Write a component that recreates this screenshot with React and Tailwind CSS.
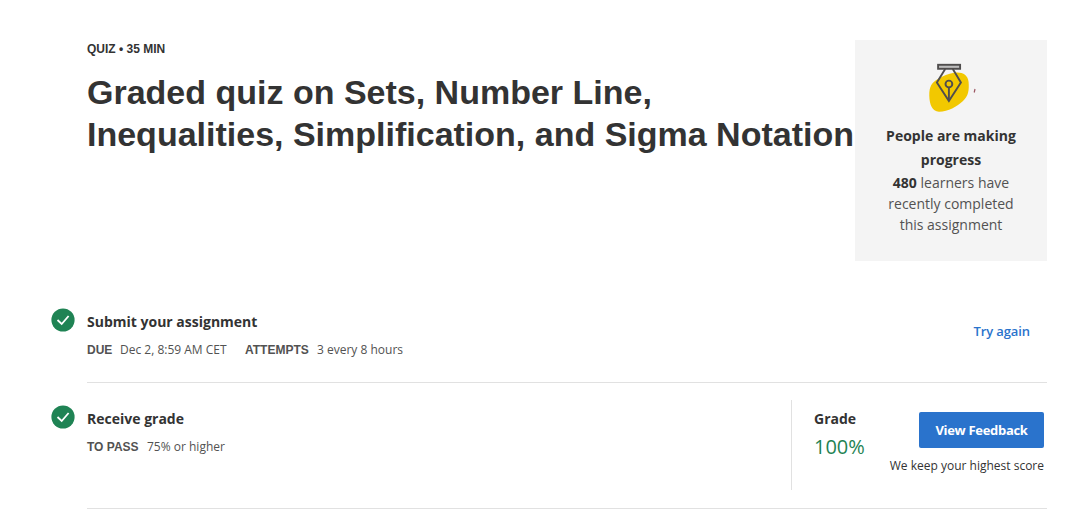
function DoneIcon() {
  return (
    <svg className="block h-6 w-6 shrink-0" viewBox="0 0 24 24" aria-hidden="true">
      <circle cx="12" cy="12" r="11.6" fill="#1f8354" />
      <path d="M6.500 12 L10.700 16 L17.600 8" fill="none" stroke="#fff" strokeWidth="1.800" />
    </svg>
  );
}

function PenIcon() {
  return (
    <svg className="block h-[50px] w-[50px]" viewBox="0 0 50 50" aria-hidden="true">
      <path
        d="M29 10.800 C36.500 9.500 43 12.500 43.600 20 C44.200 28 43.500 34 38 39 C32 44.500 23 49.800 14 49.700 C7 49.500 4.500 42 4.300 34 C4.100 24 7 20.500 13 17 C18.500 13.800 23 11.700 29 10.800 Z"
        fill="#f2c800"
      />
      <g fill="none" stroke="#4f4d4d" strokeWidth="1.900">
        <rect x="13.100" y="2.800" width="22" height="4" fill="#bdbdbd" />
        <path d="M20.200 7 L11.900 20.500 L23.900 39 L35.900 20.500 L27.800 7" />
        <circle cx="23.900" cy="22" r="3.400" />
        <path d="M23.900 25.500 V39" />
      </g>
    </svg>
  );
}

function Detail({ label, labelClass, children, valueClass }) {
  return (
    <div className="flex">
      <span className={`font-['Liberation_Sans'] text-[12px] font-bold text-[#525252] ${labelClass}`}>{label}</span>
      <span className={`text-[12px] text-[#525252] ${valueClass}`}>{children}</span>
    </div>
  );
}

export default function App() {
  return (
    <main className="h-[510px] w-[1077px] overflow-hidden bg-white pt-10 pr-[30px] pl-[51px] font-['Open_Sans',sans-serif] whitespace-nowrap text-[#333]">
      <header className="flex h-[221px] pl-9">
        <div className="w-[768px] font-['Liberation_Sans',sans-serif]">
          <p className="pt-px text-[12px] leading-4 font-bold">QUIZ • 35 MIN</p>
          <h1 className="pt-[14px] text-[34px] leading-[42px] font-bold">
            Graded quiz on Sets, Number Line,
            <br />
            Inequalities, Simplification, and Sigma Notation
          </h1>
        </div>
        <aside className="flex w-48 flex-col items-center bg-[#f4f4f4] pt-[22px] text-center">
          <div className="flex w-[52px] items-start">
            <div className="shrink-0">
              <PenIcon />
            </div>
            <svg className="mt-[26px] -ml-1 block h-[6px] w-[6px] shrink-0" viewBox="0 0 6 6" aria-hidden="true">
              <path d="M4 1 L3.200 4.500" stroke="#9b5560" strokeWidth="1.200" />
            </svg>
          </div>
          <h2 className="mt-3 text-[14px] leading-6 font-bold">
            People are making
            <br />
            progress
          </h2>
          <p className="text-[14px] leading-[21px] text-[#525252]">
            <strong className="text-[#333]">480</strong> learners have
            <br />
            recently completed
            <br />
            this assignment
          </p>
        </aside>
      </header>

      <section className="mt-[47px] flex h-[75px] gap-3">
        <DoneIcon />
        <div className="flex grow border-b border-[#e1e1e1]">
          <div className="grow pt-[3px]">
            <h3 className="text-[14px] leading-[21px] font-bold">Submit your assignment</h3>
            <div className="mt-[9px] flex gap-[18px] leading-[18px]">
              <Detail label="DUE" labelClass="w-[33px]" valueClass="w-[107px]">Dec 2, 8:59 AM CET</Detail>
              <Detail label="ATTEMPTS" labelClass="w-[72px]" valueClass="w-[86px]">3 every 8 hours</Detail>
            </div>
          </div>
          <a className="pt-[13px] pr-[17px] text-[13px] leading-5 font-semibold tracking-[-0.1px] text-[#2a73cc]">Try again</a>
        </div>
      </section>

      <section className="flex h-[126px] gap-3">
        <div className="pt-[22px]">
          <DoneIcon />
        </div>
        <div className="flex grow border-b border-[#e1e1e1]">
          <div className="w-[704px] pt-[25px]">
            <h3 className="text-[14px] leading-[21px] font-bold">Receive grade</h3>
            <div className="mt-[9px] flex leading-[18px]">
              <Detail label="TO PASS" labelClass="w-[60px]" valueClass="w-[80px]">75% or higher</Detail>
            </div>
          </div>
          <div className="mt-[17px] flex h-[90px] grow border-l border-[#e1e1e1] pr-[3px] pl-[22px]">
            <div className="pt-[8px]">
              <h4 className="text-[14px] leading-[21px] font-bold">Grade</h4>
              <p className="pt-px text-[20px] leading-[34px] text-[#1f8354]">100%</p>
            </div>
            <div className="ml-auto flex flex-col items-end pt-3">
              <button className="h-9 w-[125px] rounded-[2px] bg-[#2a73cc] pt-0.5 text-[13px] font-bold tracking-[-0.3px] text-white">
                View Feedback
              </button>
              <p className="mt-[9px] text-[12px] leading-[18px]">We keep your highest score</p>
            </div>
          </div>
        </div>
      </section>
    </main>
  );
}
